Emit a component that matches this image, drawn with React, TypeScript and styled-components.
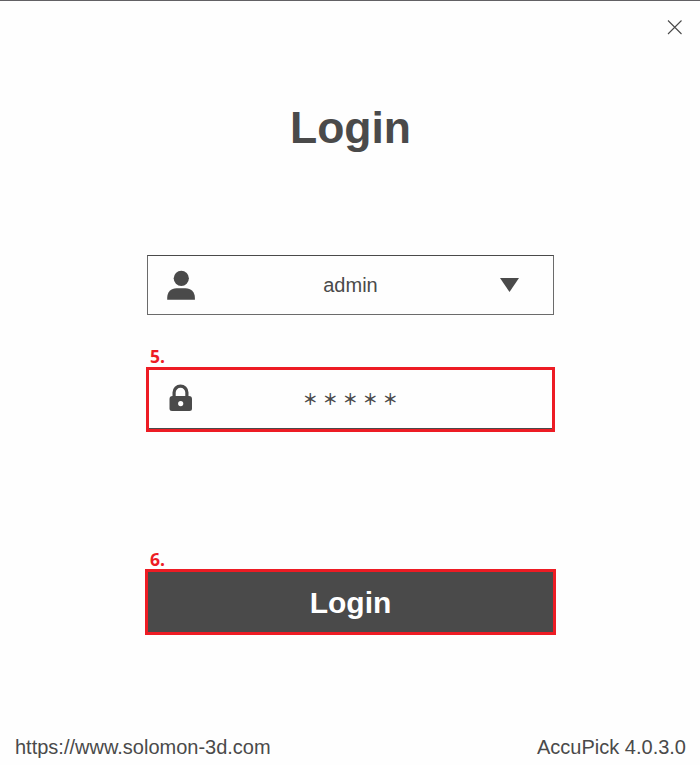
import React from "react";
import styled, { createGlobalStyle } from "styled-components";

const INK = "#4a4a4a";
const RED = "#ed1c24";

const GlobalStyle = createGlobalStyle`
  *, *::before, *::after { box-sizing: border-box; }
  body { margin: 0; background: #fff; }
`;

const Window = styled.main`
  display: flex;
  flex-direction: column;
  align-items: center;
  width: 700px;
  height: 765px;
  border-top: 1px solid #626164;
  background: #fefefe;
  color: ${INK};
  font-family: "Liberation Sans", Arial, sans-serif;
  overflow: hidden;
`;

const TitleBar = styled.header`
  display: flex;
  justify-content: flex-end;
  width: 100%;
  height: 52px;
  padding: 18px 17px 0 0;
`;

const CloseButton = styled.button`
  width: 16px;
  height: 16px;
  padding: 0;
  border: 0;
  background: none;
  svg { display: block; }
`;

const Title = styled.h1`
  margin: 49px 0 0;
  padding-left: 1px;
  height: 52px;
  font-size: 44.5px;
  line-height: 52px;
  font-weight: 700;
`;

const Form = styled.form`
  display: flex;
  flex-direction: column;
  align-items: center;
  width: 411px;
  margin-top: 101px;
`;

const Field = styled.div<{ $marked?: boolean }>`
  display: grid;
  grid-template-columns: ${(p) => (p.$marked ? "64px 1fr 64px" : "66px 1fr 66px")};
  align-items: center;
  justify-items: center;
  width: ${(p) => (p.$marked ? 409 : 407)}px;
  height: ${(p) => (p.$marked ? 65 : 60)}px;
  border: ${(p) => (p.$marked ? `3px solid ${RED}` : `1px solid #6b6b6b`)};
  border-top-color: ${(p) => (p.$marked ? RED : INK)};
  box-shadow: ${(p) => (p.$marked ? `inset 0 -1px 0 ${INK}` : "none")};
  svg { display: block; overflow: visible; }
`;

const Value = styled.span`
  padding-left: 1px;
  font-size: 20px;
  line-height: 24px;
`;

const ArrowSlot = styled.span`
  justify-self: start;
  margin-left: 13px;
`;

const Password = styled.span`
  display: block;
  padding: 0 0 3px 5px;
  font-family: "Noto Sans CJK SC", sans-serif;
  font-size: 15.5px;
  font-weight: 700;
  line-height: 30px;
  letter-spacing: 4.5px;
  white-space: nowrap;
`;

const StepLabel = styled.div<{ $gap: number; $drop?: number }>`
  align-self: flex-start;
  height: 20px;
  margin: ${(p) => p.$gap}px 0 0 5.5px;
  padding-top: ${(p) => p.$drop ?? 0}px;
  color: ${RED};
  font: 700 17.5px/18px "Open Sans", sans-serif;
`;

const Submit = styled.button`
  width: 411px;
  height: 66px;
  padding: 2px 0 0 1px;
  border: 3px solid ${RED};
  background: ${INK};
  color: #fff;
  font: 700 30px/58px "Liberation Sans", Arial, sans-serif;
`;

const Footer = styled.footer`
  display: flex;
  justify-content: space-between;
  width: 100%;
  margin-top: auto;
  padding: 0 14px 6px 15px;
  font-size: 20px;
  line-height: 24px;
`;

export default function App() {
  return (
    <>
      <GlobalStyle />
      <Window>
        <TitleBar>
          <CloseButton aria-label="Close">
            <svg width="16" height="16" viewBox="0 0 16 16" stroke={INK} strokeWidth="1.1">
              <path d="M1 1.5 14.5 15M14.5 1.5 1 15" />
            </svg>
          </CloseButton>
        </TitleBar>
        <Title>Login</Title>
        <Form onSubmit={(e) => e.preventDefault()}>
          <Field>
            <svg width="28" height="30" viewBox="0 0 28 30" fill={INK}>
              <circle cx="14.3" cy="8.3" r="7.6" />
              <path d="M.2 29.7V28C.2 22 4 18.3 9.5 18.3h9C24 18.3 27.9 22 27.9 28v1.7Z" />
            </svg>
            <Value>admin</Value>
            <ArrowSlot>
              <svg width="20" height="14" viewBox="0 0 20 14" fill={INK}>
                <path d="M0 0h19L9.5 14Z" />
              </svg>
            </ArrowSlot>
          </Field>
          <StepLabel $gap={32}>5.</StepLabel>
          <Field $marked>
            <svg width="24" height="30" viewBox="0 1 24 30" fill={INK}>
              <path
                fillRule="evenodd"
                d="M3.5 12V8.5a8 8 0 0 1 16 0V12h.5a3 3 0 0 1 3 3v9.5a2.5 2.5 0 0 1-2.5 2.5h-17.5A2.5 2.5 0 0 1 .5 24.5V15a3 3 0 0 1 3-3ZM6.7 12h9.6V8.6a4.8 4.8 0 0 0-9.6 0ZM11.7 17a2.6 2.6 0 1 0 0 5.2 2.6 2.6 0 0 0 0-5.2Z"
              />
            </svg>
            <Password>{"\uFF0A".repeat(5)}</Password>
          </Field>
          <StepLabel $gap={117} $drop={1}>6.</StepLabel>
          <Submit type="submit">Login</Submit>
        </Form>
        <Footer>
          <span>https://www.solomon-3d.com</span>
          <span>AccuPick 4.0.3.0</span>
        </Footer>
      </Window>
    </>
  );
}
